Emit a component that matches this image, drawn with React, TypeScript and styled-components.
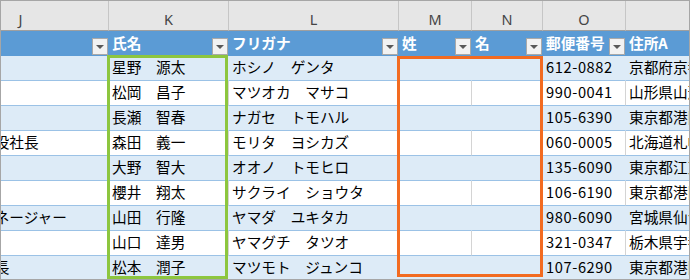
import React from "react";
import styled, { createGlobalStyle } from "styled-components";

const GlobalStyle = createGlobalStyle`
  html, body { margin: 0; padding: 0; background: #ffffff; }
  body { font-family: "Noto Sans CJK JP", "Noto Sans", sans-serif; }
`;

const COLS = "176px 120px 170px 73px 71px 83px 200px";

const Viewport = styled.div`
  width: 690px;
  height: 280px;
  box-sizing: border-box;
  border: 1px solid #a6a6a6;
  overflow: hidden;
  background: #ffffff;
`;

/* the sheet is scrolled horizontally: part of column J lies left of the view */
const Sheet = styled.div`
  position: relative;
  margin-left: -68px;
  display: flex;
  flex-direction: column;
  width: max-content;
`;

const Row = styled.div<{ $h: number }>`
  display: grid;
  grid-template-columns: ${COLS};
  height: ${(p) => p.$h}px;
`;

const ColLetter = styled.div`
  display: flex;
  align-items: flex-end;
  justify-content: center;
  box-sizing: border-box;
  padding-bottom: 4px;
  background: #e6e6e6;
  border-right: 1px solid #c6c6c6;
  border-bottom: 1px solid #9f9f9f;
  font-family: "Noto Sans", "Liberation Sans", sans-serif;
  font-size: 14.5px;
  line-height: 1;
  color: #444444;
`;

const HeadCell = styled.div`
  display: flex;
  align-items: center;
  justify-content: space-between;
  box-sizing: border-box;
  padding-left: 3px;
  padding-right: 1px;
  background: #5b9bd5;
  color: #ffffff;
  font-weight: 700;
  font-size: 14.67px;
  line-height: 1;
  white-space: nowrap;
  overflow: hidden;
`;

const HeadLabel = styled.span`
  padding-bottom: 1px;
`;

const FilterButton = styled.span`
  align-self: flex-end;
  flex: none;
  margin-bottom: 1px;
  width: 16px;
  height: 17px;
  box-sizing: border-box;
  border: 1px solid #a9a9a9;
  background: #f2f2f2;
  display: flex;
  align-items: center;
  justify-content: center;
`;

const Caret = styled.span`
  width: 0;
  height: 0;
  border-left: 4px solid transparent;
  border-right: 4px solid transparent;
  border-top: 4px solid #595959;
  margin-top: 1px;
`;

const Cell = styled.div<{ $band: boolean }>`
  display: flex;
  align-items: center;
  box-sizing: border-box;
  padding: 0 0 2px 3px;
  background: ${(p) => (p.$band ? "#ddebf7" : "#ffffff")};
  border-bottom: 1px solid #9bc2e6;
  border-right: 1px solid ${(p) => (p.$band ? "#ddebf7" : "#d4d4d4")};
  font-size: 14.67px;
  line-height: 1;
  color: #000000;
  white-space: nowrap;
  overflow: hidden;
`;

const NumText = styled.span`
  letter-spacing: 0.6px;
`;

const Frame = styled.div<{ $color: string }>`
  position: absolute;
  box-sizing: border-box;
  border: 3px solid ${(p) => p.$color};
  pointer-events: none;
`;

const GreenFrame = styled(Frame)`
  left: 174px;
  top: 54px;
  width: 121px;
  height: 224px;
`;

const OrangeFrame = styled(Frame)`
  left: 464px;
  top: 55px;
  width: 146px;
  height: 221px;
`;

const letters = ["J", "K", "L", "M", "N", "O", "P"];
const heads = ["", "氏名", "フリガナ", "姓", "名", "郵便番号", "住所A"];

type R = { j: string; k: string; l: string; o: string; p: string };

const rows: R[] = [
  { j: "", k: "星野　源太", l: "ホシノ　ゲンタ", o: "612-0882", p: "京都府京都市伏見区" },
  { j: "", k: "松岡　昌子", l: "マツオカ　マサコ", o: "990-0041", p: "山形県山形市緑町" },
  { j: "", k: "長瀬　智春", l: "ナガセ　トモハル", o: "105-6390", p: "東京都港区虎ノ門" },
  { j: "代表取締役社長", k: "森田　義一", l: "モリタ　ヨシカズ", o: "060-0005", p: "北海道札幌市中央区" },
  { j: "", k: "大野　智大", l: "オオノ　トモヒロ", o: "135-6090", p: "東京都江東区豊洲" },
  { j: "", k: "櫻井　翔太", l: "サクライ　ショウタ", o: "106-6190", p: "東京都港区六本木" },
  { j: "エリアマネージャー", k: "山田　行隆", l: "ヤマダ　ユキタカ", o: "980-6090", p: "宮城県仙台市青葉区" },
  { j: "", k: "山口　達男", l: "ヤマグチ　タツオ", o: "321-0347", p: "栃木県宇都宮市" },
  { j: "営業本部長", k: "松本　潤子", l: "マツモト　ジュンコ", o: "107-6290", p: "東京都港区赤坂" },
];

export default function App() {
  return (
    <>
      <GlobalStyle />
      <Viewport>
        <Sheet>
          <Row $h={30}>
            {letters.map((l) => (
              <ColLetter key={l}>{l}</ColLetter>
            ))}
          </Row>
          <Row $h={25}>
            {heads.map((h, i) => (
              <HeadCell key={i}>
                <HeadLabel>{h}</HeadLabel>
                {i < 6 && (
                  <FilterButton>
                    <Caret />
                  </FilterButton>
                )}
              </HeadCell>
            ))}
          </Row>
          {rows.map((r, i) => {
            const band = i % 2 === 0;
            return (
              <Row $h={25} key={i}>
                <Cell $band={band}>{r.j}</Cell>
                <Cell $band={band}>{r.k}</Cell>
                <Cell $band={band}>{r.l}</Cell>
                <Cell $band={band} />
                <Cell $band={band} />
                <Cell $band={band}>
                  <NumText>{r.o}</NumText>
                </Cell>
                <Cell $band={band}>{r.p}</Cell>
              </Row>
            );
          })}
          <GreenFrame $color="#8dc63f" />
          <OrangeFrame $color="#f26b21" />
        </Sheet>
      </Viewport>
    </>
  );
}
